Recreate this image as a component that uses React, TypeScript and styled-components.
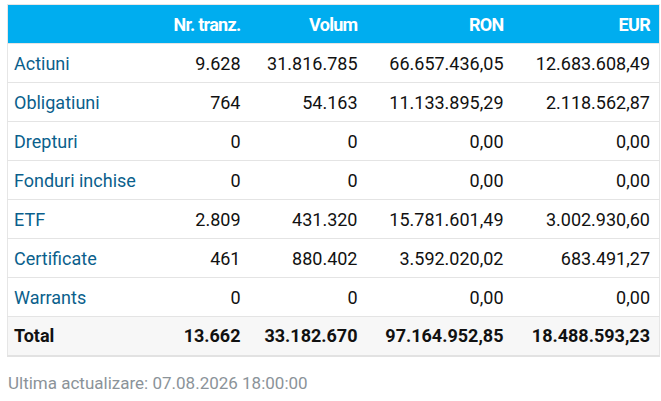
import React from "react";
import styled, { createGlobalStyle } from "styled-components";

const Global = createGlobalStyle`
  html, body { margin: 0; padding: 0; background: #fff; }
  body { font-family: Roboto, "Liberation Sans", sans-serif; }
`;

const Page = styled.div`
  padding: 4px 3px 0 7px;
  width: 651px;
`;

const Table = styled.table`
  width: 652px;
  border-collapse: collapse;
  table-layout: fixed;
  border: 1px solid #e6e6e6;
  border-bottom: 2px solid #e2e2e2;
  font-size: 18px;
`;

const HeadCell = styled.th<{ $w: number }>`
  width: ${(p) => p.$w}px;
  height: 39px;
  padding: 0 9px 0 0;
  background: #00adef;
  color: #fff;
  font-size: 18px;
  font-weight: 700;
  text-align: right;
  letter-spacing: -0.7px;
  white-space: nowrap;
  box-sizing: border-box;
`;

const Row = styled.tr<{ $total?: boolean }>`
  height: 39px;
  background: ${(p) => (p.$total ? "#f7f7f7" : "#fff")};
  border-top: 1px solid #e4e4e4;
`;

const LabelCell = styled.td<{ $total?: boolean }>`
  padding: 0 6px;
  text-align: left;
  color: ${(p) => (p.$total ? "#111" : "#0b5f8c")};
  font-weight: ${(p) => (p.$total ? 700 : 400)};
  white-space: nowrap;
`;

const NumCell = styled.td<{ $total?: boolean }>`
  padding: 0 9px 0 0;
  text-align: right;
  color: #111;
  font-weight: ${(p) => (p.$total ? 700 : 400)};
  white-space: nowrap;
`;

const Footer = styled.div`
  margin-top: 16px;
  padding-left: 1px;
  color: #8b9399;
  font-size: 17px;
`;

const cols = [
  { label: "", w: 164 },
  { label: "Nr. tranz.", w: 78 },
  { label: "Volum", w: 117 },
  { label: "RON", w: 146 },
  { label: "EUR", w: 147 },
];

const rows: [string, string, string, string, string][] = [
  ["Actiuni", "9.628", "31.816.785", "66.657.436,05", "12.683.608,49"],
  ["Obligatiuni", "764", "54.163", "11.133.895,29", "2.118.562,87"],
  ["Drepturi", "0", "0", "0,00", "0,00"],
  ["Fonduri inchise", "0", "0", "0,00", "0,00"],
  ["ETF", "2.809", "431.320", "15.781.601,49", "3.002.930,60"],
  ["Certificate", "461", "880.402", "3.592.020,02", "683.491,27"],
  ["Warrants", "0", "0", "0,00", "0,00"],
];

const total: [string, string, string, string, string] = [
  "Total",
  "13.662",
  "33.182.670",
  "97.164.952,85",
  "18.488.593,23",
];

export default function App() {
  return (
    <>
      <Global />
      <Page>
        <Table>
          <thead>
            <tr>
              {cols.map((c, i) => (
                <HeadCell key={i} $w={c.w}>
                  {c.label}
                </HeadCell>
              ))}
            </tr>
          </thead>
          <tbody>
            {rows.map((r) => (
              <Row key={r[0]}>
                <LabelCell>{r[0]}</LabelCell>
                {r.slice(1).map((v, i) => (
                  <NumCell key={i}>{v}</NumCell>
                ))}
              </Row>
            ))}
            <Row $total>
              <LabelCell $total>{total[0]}</LabelCell>
              {total.slice(1).map((v, i) => (
                <NumCell key={i} $total>
                  {v}
                </NumCell>
              ))}
            </Row>
          </tbody>
        </Table>
        <Footer>Ultima actualizare: 07.08.2026 18:00:00</Footer>
      </Page>
    </>
  );
}
